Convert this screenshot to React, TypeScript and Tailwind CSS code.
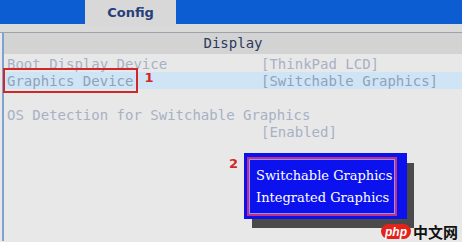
const rows = [
  { label: "Boot Display Device", value: "[ThinkPad LCD]", active: false },
  { label: "Graphics Device", value: "[Switchable Graphics]", active: true },
  { label: "", value: "", active: false },
  { label: "OS Detection for Switchable Graphics", value: "", active: false },
  { label: "", value: "[Enabled]", active: false },
];

const App = () => {
  return (
    <div className="relative w-[462px] h-[242px] overflow-hidden bg-[#e8e8e8] font-['DejaVu_Sans_Mono',monospace]">
      {/* top menu bar */}
      <div className="flex h-[24px] bg-[#0c5dd2]">
        <div className="w-[85px]" />
        <div className="w-[91px] h-[26px] bg-[#d8d8d8] flex items-center justify-center font-['DejaVu_Sans',sans-serif] font-bold text-[13px] text-[#263f7c]">
          Config
        </div>
      </div>
      <div className="h-[9px] bg-[#dadada] border-b border-[#9ca3ab]" />

      {/* panel */}
      <div className="ml-[2px] border-l-2 border-[#7ea3d2] h-[208px]">
        <div className="h-[21px] bg-[#d3d3d3] flex items-center justify-center text-[14px] text-[#2c3a5c]">
          Display
        </div>
        <div className="pt-[1px]">
          {rows.map((row, i) => (
            <div
              key={i}
              className={`grid grid-cols-[254px_1fr] h-[17px] items-center pl-[3px] text-[14px] leading-none whitespace-nowrap ${
                row.active ? "bg-[#cfe5f5] text-[#8ea2bc]" : "text-[#a7b1c5]"
              }`}
            >
              <div className="flex items-center">
                <span className="relative">
                  {row.label}
                  {row.active && (
                    <span className="absolute -left-[4px] -right-[5px] -top-[6px] -bottom-[5px] border-2 border-[#d0282a]" />
                  )}
                </span>
                {row.active && (
                  <span className="relative -top-[3px] ml-[11px] text-[13px] leading-none font-bold text-[#d0282a] font-['DejaVu_Sans',sans-serif]">
                    1
                  </span>
                )}
              </div>
              <span>{row.value}</span>
            </div>
          ))}
        </div>
      </div>

      {/* popup menu */}
      <div className="absolute left-[229px] top-[153px] flex items-start gap-[6px]">
        <div className="pt-[1px] text-[13px] font-bold text-[#d0282a] font-['DejaVu_Sans',sans-serif]">
          2
        </div>
        <div className="relative w-[163px] h-[66px]">
          <div className="absolute left-[8px] top-[10px] w-[162px] h-[65px] bg-[#4a4a4a]" />
          <div className="relative w-full h-full bg-[#0c12ee] pl-[5px] pt-[6px] pr-[12px] pb-[5px]">
            <div className="h-full border border-[#8f8fff] outline-2 outline-[#c2307e] flex flex-col justify-center gap-[2px] pl-[6px] text-white text-[13px] leading-[20px] font-['DejaVu_Serif',serif] whitespace-nowrap">
              <span>Switchable Graphics</span>
              <span>Integrated Graphics</span>
            </div>
          </div>
        </div>
      </div>

      {/* watermark */}
      <div className="absolute left-[381px] top-[224px] flex items-center gap-[2px]">
        <div className="w-[30px] h-[15px] rounded-full bg-[#e3221c] flex items-center justify-center text-white italic font-bold text-[12px] leading-none font-['Liberation_Sans',sans-serif]">
          php
        </div>
        <span className="text-[15px] leading-none font-bold text-[#111] font-['Noto_Sans_CJK_SC',sans-serif]">
          中文网
        </span>
      </div>
    </div>
  );
};

export default App;
